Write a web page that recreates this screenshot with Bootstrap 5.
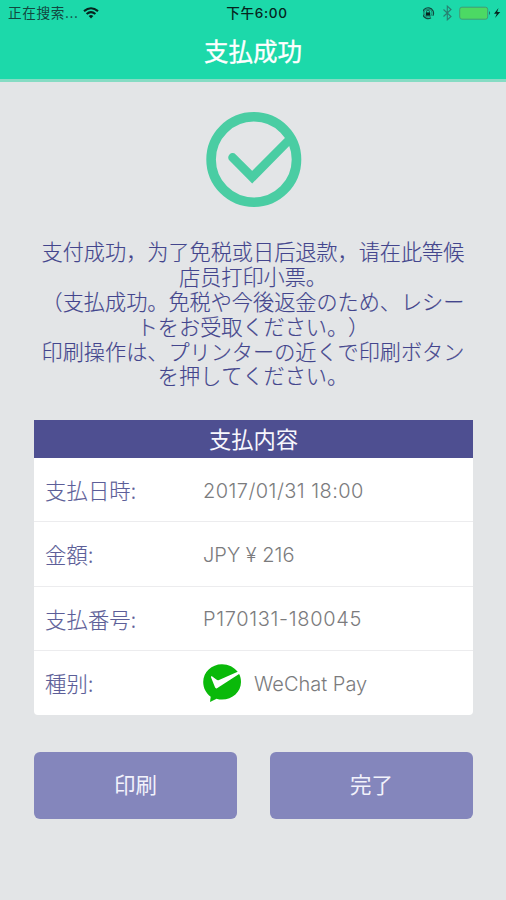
<!DOCTYPE html>
<html lang="ja">
<head>
<meta charset="utf-8">
<meta name="viewport" content="width=device-width, initial-scale=1">
<title>支払成功</title>
<link href="https://cdn.jsdelivr.net/npm/bootstrap@5.3.0/dist/css/bootstrap.min.css" rel="stylesheet">
<style>
body { background: #e3e5e7; font-family: Inter, "Noto Sans CJK SC", sans-serif; height: 900px; overflow: hidden; }
.app-head { background: #1cd9aa; height: 82px; border-bottom: 3px solid #85dcc4; }
.status-bar { height: 26px; padding: 0 3px 0 8px; font-size: 13.6px; line-height: 26px; color: #12483f; display: grid; grid-template-columns: 1fr auto 1fr; }
.carrier { letter-spacing: .65px; }
.clock { color: #06241e; font-weight: 500; letter-spacing: .65px; padding-left: 3px; }
.app-title { font: 400 24.5px/49px "Noto Sans CJK SC", sans-serif; -webkit-text-stroke: .35px #fff; height: 50px; color: #fff; }
.hero { padding-top: 29px; height: 157px; }
.notice { font: 300 21.15px/24.9px "Noto Sans CJK SC", sans-serif; font-kerning: none; font-feature-settings: "chws" 0, "halt" 0, "palt" 0; text-spacing-trim: space-all; color: #43458d; -webkit-text-stroke: .15px #43458d; white-space: nowrap; height: 181px; }
.notice div { height: 24.9px; }
.jp { font-family: "Noto Sans CJK JP", sans-serif; }
.panel { margin: 0 33px 0 34px; border-radius: 0 0 4px 4px; overflow: hidden; }
.panel-head { height: 38px; background: #4e4f91; color: #f7f7fd; font: 400 22.3px/37px "Noto Sans CJK JP", sans-serif; }
.line { height: 64.3px; padding-left: 11px; border-bottom: 1.5px solid #ececee; }
.line:last-child { border-bottom: 0; }
.term { width: 158px; color: #5c5e98; font: 300 21.3px/1 "Noto Sans CJK JP", sans-serif; -webkit-text-stroke: .15px #5c5e98; letter-spacing: .15px; }
.value { color: #7b7b7d; font-size: 20px; font-weight: 300; line-height: 1; padding-top: 2px; }
.stamp { letter-spacing: .43px; }
.serial { letter-spacing: .65px; }
.actions { gap: 33px; margin: 37px 33px 0 34px; }
.act { height: 67px; border-radius: 6px; background: #8486bc; color: #f2f2fb; border: 0; padding-bottom: 9px; font: 400 21.5px/1 "Noto Sans CJK SC", sans-serif; }
</style>
</head>
<body>
<header class="app-head">
  <div class="status-bar">
    <div class="d-flex align-items-center"><span class="carrier">正在搜索...</span>
      <svg class="ms-1" width="16" height="12" viewBox="0 0 16 12"><g fill="none" stroke="#06241e" stroke-width="2.1"><path d="M1 4.1Q8-1.6 15 4.1"/><path d="M3.600 7Q8 3.300 12.400 7"/></g><path d="M5.700 9Q8 7.200 10.300 9L8 11.500z" fill="#06241e"/></svg>
    </div>
    <div class="clock">下午6:00</div>
    <div class="d-flex align-items-center justify-content-end">
      <svg width="80" height="16" viewBox="0 0 80 16">
        <g transform="translate(-2 0)"><g fill="none" stroke="#13483f" stroke-width="1.2"><path d="M10 12.7A5.4 5.4 0 1 1 11.8 10.8"/><circle cx="7" cy="8" r="4" stroke-width=".5"/><path d="M5.600 7.600V6.400a1.400 1.400 0 0 1 2.800 0v1.200" stroke-width="1"/></g>
        <rect x="4.800" y="7.400" width="4.400" height="3.300" fill="#06241e"/>
        <path d="M22.500 4.500l7.500 7-3.700 3.400V1.100L30 4.500l-7.500 7" fill="none" stroke="#287f70" stroke-width="1.1"/></g>
        <rect x="36.700" y="2.200" width="28" height="12" rx="2.200" fill="#4cd964" stroke="#439b75"/>
        <path d="M66 6q2.200 2 0 4z" fill="#28705f"/>
        <path d="M75.500 3L71 8.700h2.800L72 13l5.200-5.900h-3z" fill="#06241e"/>
      </svg>
    </div>
  </div>
  <h1 class="app-title text-center m-0">支払成功</h1>
</header>
<main>
  <div class="hero text-center">
    <svg class="d-block mx-auto" width="97" height="97" viewBox="0 0 97 97" fill="none" stroke="#4acda3"><circle cx="48.800" cy="48.500" r="42.700" stroke-width="9.600"/><path d="M27.600 46.500L47.200 66.200 84 29" stroke-width="8.800" stroke-linecap="round"/></svg>
  </div>
  <div class="notice text-center">
    <div>支付成功，为了免税或日后退款，请在此等候</div>
    <div>店员打印小票。</div>
    <div class="jp">（支払成功。免税や今後返金のため、レシー</div>
    <div class="jp">トをお受取ください。）</div>
    <div class="jp">印刷操作は、プリンターの近くで印刷ボタン</div>
    <div class="jp">を押してください。</div>
  </div>
  <section class="panel bg-white">
    <h2 class="panel-head text-center m-0">支払内容</h2>
    <div class="line d-flex align-items-center"><div class="term">支払日時:</div><div class="value stamp">2017/01/31 18:00</div></div>
    <div class="line d-flex align-items-center"><div class="term">金額:</div><div class="value">JPY ¥ 216</div></div>
    <div class="line d-flex align-items-center"><div class="term">支払番号:</div><div class="value serial">P170131-180045</div></div>
    <div class="line d-flex align-items-center"><div class="term">種别:</div><div class="value d-flex align-items-center">
      <svg width="39" height="40" viewBox="0 0 39 40"><path d="M19 .2C8.600.2.2 8 .2 18c0 6.400 3.200 11.600 7.500 14.700L7 38l6.600-3.200c1.700.6 3.500.8 5.400.8C29.600 35.600 38 27.800 38 18c0-3-.6-5.600-1.900-8L14 24.200c-.8.5-1.500.1-1.900-.6L8 13.300c-.3-.9.5-1.200 1.300-.7l4.400 3.200c.8.5 1.500.4 2.300.1L34.700 7.800C31.200 3.100 25.500.2 19 .2z" fill="#0ab90a"/></svg>
      <span class="ms-2 ps-1">WeChat Pay</span></div></div>
  </section>
  <div class="actions d-flex">
    <button class="btn act flex-fill w-50" type="button">印刷</button>
    <button class="btn act flex-fill w-50" type="button">完了</button>
  </div>
</main>
<script src="https://cdn.jsdelivr.net/npm/bootstrap@5.3.0/dist/js/bootstrap.bundle.min.js"></script>
</body>
</html>
